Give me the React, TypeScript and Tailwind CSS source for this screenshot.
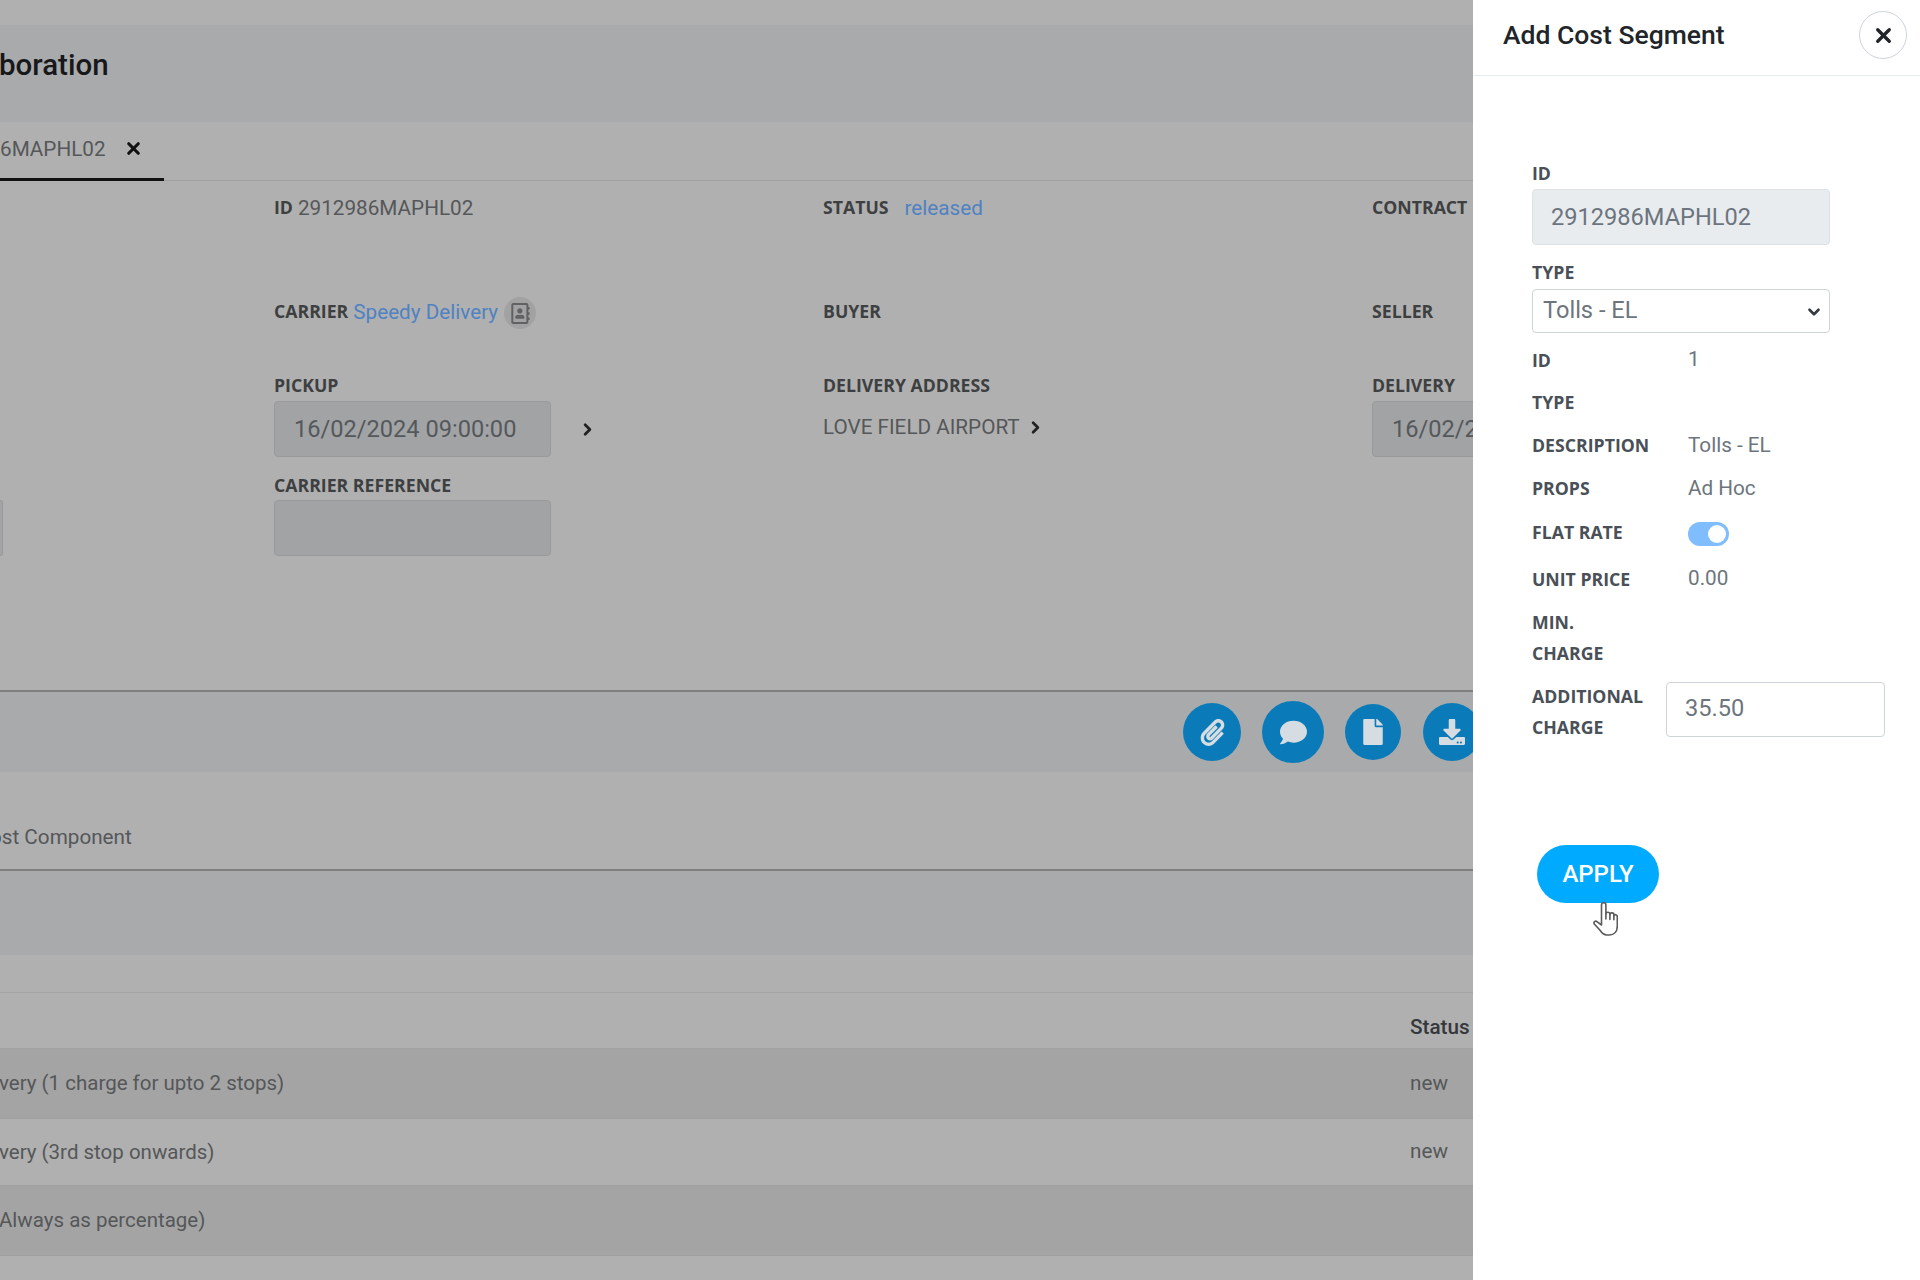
import { ChevronDown, ChevronRight, X } from "lucide-react";
import { FaComment, FaDownload, FaFile, FaPaperclip, FaRegAddressBook } from "react-icons/fa";

const label = "font-['Open_Sans',sans-serif] text-[17.7px] font-bold leading-[22px] text-[#3d3f41]";
const panelLabel = "font-['Open_Sans',sans-serif] text-[17.7px] font-bold leading-[31px] text-[#495057]";
const value = "text-[20.7px] leading-6 text-[#555759]";
const dimInput = "h-14 w-[277px] rounded border border-[#989a9c] bg-[#a1a3a5] pl-[19px] text-[23.6px] text-[#55585b]";

const rows = [
  { name: "ID", val: "1", height: "h-[42px]" },
  { name: "TYPE", val: "", height: "h-[43px]" },
  { name: "DESCRIPTION", val: "Tolls - EL", height: "h-[43px]" },
  { name: "PROPS", val: "Ad Hoc", height: "h-[43px]" },
];

const tableRows = [
  { text: "very (1 charge for upto 2 stops)", status: "new", cls: "h-[70px] bg-[#a4a4a4]" },
  { text: "very (3rd stop onwards)", status: "new", cls: "h-[67px] bg-[#b0b0b0]" },
  { text: "Always as percentage)", status: "", cls: "h-[70px] bg-[#a4a4a4]" },
];

function ActionButton({ size, children }: { size: string; children: React.ReactNode }) {
  return (
    <span className={`flex shrink-0 items-center justify-center rounded-full bg-[#0a7bb8] text-[#d5dde2] ${size}`}>
      {children}
    </span>
  );
}

function HandCursor() {
  return (
    <svg viewBox="0 0 26 35" className="absolute left-[55px] top-[57px] h-[35px] w-[26px]" fill="white" stroke="#5a5a5a" strokeWidth="1.6" strokeLinejoin="round" strokeLinecap="round">
      <path d="M9.5 23 V3 a2.2 2.2 0 0 1 4.4 0 V12 a2 2 0 0 1 4 0.5 a2 2 0 0 1 4 0.8 a2 2 0 0 1 3.4 1.7 v9 c0 5.5 -3 9 -8 9 h-2.5 c-3 0 -5 -2 -7 -5 l-5.5 -6 c-1.2 -2 1 -3.7 3 -2.2 Z" />
      <path d="M13.9 12 v5 M17.9 12.5 v5 M21.9 13.3 v4.5" fill="none" />
    </svg>
  );
}

export default function App() {
  return (
    <div className="flex h-[1280px] w-[1920px] overflow-hidden bg-[#b0b0b0] font-['Roboto',sans-serif]">
      {/* dimmed page behind the drawer */}
      <div className="flex w-[1473px] shrink-0 flex-col overflow-hidden">
        <div className="mt-[25px] flex h-[97px] items-center bg-[#a9aaac]">
          <h1 className="-mt-[16px] -ml-px text-[29.5px] font-medium text-[#17181a]">boration</h1>
        </div>

        <div className="flex h-[59px] border-b border-[#a0a0a0]">
          <div className="flex h-[59px] w-[164px] items-center border-b-[3px] border-[#111] pb-[3px]">
            <span className={value}>6MAPHL02</span>
            <X className="ml-[18px] h-[19px] w-[19px] text-[#111]" strokeWidth={4} />
          </div>
        </div>

        <div className="grid h-[509px] grid-cols-[274px_549px_549px_101px] grid-rows-[104px_74px_100px_1fr] pt-[15px]">
          <div />
          <div className="flex items-start">
            <span className={label}>ID</span>
            <span className={`${value} ml-[5px]`}>2912986MAPHL02</span>
          </div>
          <div className="flex items-start">
            <span className={label}>STATUS</span>
            <span className="ml-4 text-[20.7px] leading-6 text-[#4f82c2]">released</span>
          </div>
          <span className={label}>CONTRACT</span>

          <div />
          <div className="flex items-start">
            <span className={label}>CARRIER</span>
            <span className="ml-[5px] text-[20.7px] leading-6 text-[#4f82c2]">Speedy Delivery</span>
            <span className="ml-[6px] -mt-[3px] flex h-8 w-8 items-center justify-center rounded-full bg-[#a2a2a2]">
              <FaRegAddressBook className="h-[21px] w-[21px] text-[#5f6163]" />
            </span>
          </div>
          <span className={label}>BUYER</span>
          <span className={label}>SELLER</span>

          <div />
          <div>
            <div className={label}>PICKUP</div>
            <div className="mt-[5px] flex items-center">
              <input readOnly value="16/02/2024 09:00:00" className={dimInput} />
              <ChevronRight className="ml-[27px] h-[19px] w-[19px] text-[#222]" strokeWidth={3.5} />
            </div>
          </div>
          <div>
            <div className={label}>DELIVERY ADDRESS</div>
            <div className="mt-[19px] flex items-center">
              <span className={value}>LOVE FIELD AIRPORT</span>
              <ChevronRight className="ml-[6px] h-[19px] w-[19px] text-[#222]" strokeWidth={3.5} />
            </div>
          </div>
          <div>
            <div className={label}>DELIVERY</div>
            <input readOnly value="16/02/2024 09:00:00" className={`${dimInput} mt-[5px]`} />
          </div>

          <div className="pt-[26px]">
            <div className="h-14 w-[3px] rounded-r border border-l-0 border-[#989a9c] bg-[#a1a3a5]" />
          </div>
          <div>
            <div className={label}>CARRIER REFERENCE</div>
            <div className="mt-[4px] h-14 w-[277px] rounded border border-[#989a9c] bg-[#a1a3a5]" />
          </div>
        </div>

        <div className="flex h-[82px] items-center border-t-2 border-[#7f7f7f] bg-[#a9aaac]">
          <div className="ml-[1183px] flex items-center">
            <ActionButton size="h-[58px] w-[58px]">
              <FaPaperclip className="h-[27px] w-[27px]" />
            </ActionButton>
            <span className="w-[21px]" />
            <ActionButton size="h-[62px] w-[62px]">
              <FaComment className="h-[27px] w-[27px]" />
            </ActionButton>
            <span className="w-[21px]" />
            <ActionButton size="h-[56px] w-[56px]">
              <FaFile className="h-[26px] w-[26px]" />
            </ActionButton>
            <span className="w-[22px]" />
            <ActionButton size="h-[58px] w-[58px]">
              <FaDownload className="h-[26px] w-[26px]" />
            </ActionButton>
          </div>
        </div>

        <div className="flex h-[99px] items-center border-b-2 border-[#7f7f7f] pt-[34px]">
          <span className="-ml-[10px] text-[20.7px] text-[#555759]">ost Component</span>
        </div>
        <div className="h-[84px] shrink-0 bg-[#a9aaac]" />
        <div className="h-[38px] shrink-0 border-b border-[#a4a4a4]" />

        <div className="flex h-[56px] shrink-0 items-center justify-end border-b border-[#a0a2a4] pr-[1px] pt-[14px]">
          <span className="w-[62px] text-[20.7px] font-medium text-[#35383b]">Status</span>
        </div>
        {tableRows.map((row) => (
          <div key={row.text} className={`flex shrink-0 items-center justify-between border-b border-[#a0a0a0] ${row.cls}`}>
            <span className="-ml-px text-[20.5px] text-[#555759]">{row.text}</span>
            <span className="w-[63px] text-[20.7px] text-[#555759]">{row.status}</span>
          </div>
        ))}
      </div>

      {/* drawer */}
      <aside className="flex w-[447px] shrink-0 flex-col bg-white">
        <header className="flex h-[76px] shrink-0 items-center justify-between border-b border-[#e9ecef] pb-[5px] pl-[30px] pr-[13px]">
          <h2 className="text-[26.5px] font-medium text-[#212529]">Add Cost Segment</h2>
          <button className="flex h-12 w-12 items-center justify-center rounded-full border border-[#ced4da] text-[#212529]">
            <X className="h-[23px] w-[23px]" strokeWidth={3.5} />
          </button>
        </header>

        <div className="flex flex-col pl-[59px]">
          <label className={`${panelLabel} mt-[86px] !leading-[22px]`}>ID</label>
          <input
            readOnly
            value="2912986MAPHL02"
            className="mt-[5px] h-14 w-[298px] rounded border border-[#dee2e6] bg-[#e9ecef] pl-[18px] text-[23.6px] text-[#6c757d]"
          />
          <label className={`${panelLabel} mt-4 !leading-[22px]`}>TYPE</label>
          <div className="relative mt-[6px] w-[298px]">
            <select
              defaultValue="Tolls - EL"
              className="h-11 w-full appearance-none rounded border border-[#ced4da] bg-white pl-[10px] text-[23.6px] text-[#6c757d]"
            >
              <option>Tolls - EL</option>
            </select>
            <ChevronDown className="pointer-events-none absolute right-[7px] top-[14px] h-[18px] w-[18px] text-[#343a40]" strokeWidth={3.5} />
          </div>

          <div className="mt-[6px] flex flex-col">
            {rows.map((row) => (
              <div key={row.name} className={`flex items-center ${row.height}`}>
                <span className={`${panelLabel} w-[156px]`}>{row.name}</span>
                <span className="text-[20.7px] text-[#6c757d]">{row.val}</span>
              </div>
            ))}
            <div className="flex h-[45px] items-center">
              <span className={`${panelLabel} w-[156px]`}>FLAT RATE</span>
              <span className="mt-[3px] flex h-6 w-[41px] items-center justify-end rounded-full bg-[#80bdff] pr-[3px]">
                <span className="h-[18px] w-[18px] rounded-full bg-white" />
              </span>
            </div>
            <div className="flex h-[48px] items-center">
              <span className={`${panelLabel} w-[156px]`}>UNIT PRICE</span>
              <span className="text-[20.7px] text-[#6c757d]">0.00</span>
            </div>
            <div className={`${panelLabel} mt-[4px] w-[90px]`}>MIN. CHARGE</div>
            <div className="mt-[12px] flex items-start">
              <div className={`${panelLabel} w-[134px]`}>ADDITIONAL CHARGE</div>
              <input
                readOnly
                value="35.50"
                className="mt-px h-[55px] w-[219px] rounded border border-[#ced4da] bg-white pb-[3px] pl-[18px] text-[23.6px] text-[#6c757d]"
              />
            </div>
          </div>

          <div className="relative ml-[5px] mt-[102px] w-[122px]">
            <button className="h-[58px] w-[122px] rounded-full bg-[#00aaff] pb-px text-[24px] font-medium text-white">APPLY</button>
            <HandCursor />
          </div>
        </div>
      </aside>
    </div>
  );
}
